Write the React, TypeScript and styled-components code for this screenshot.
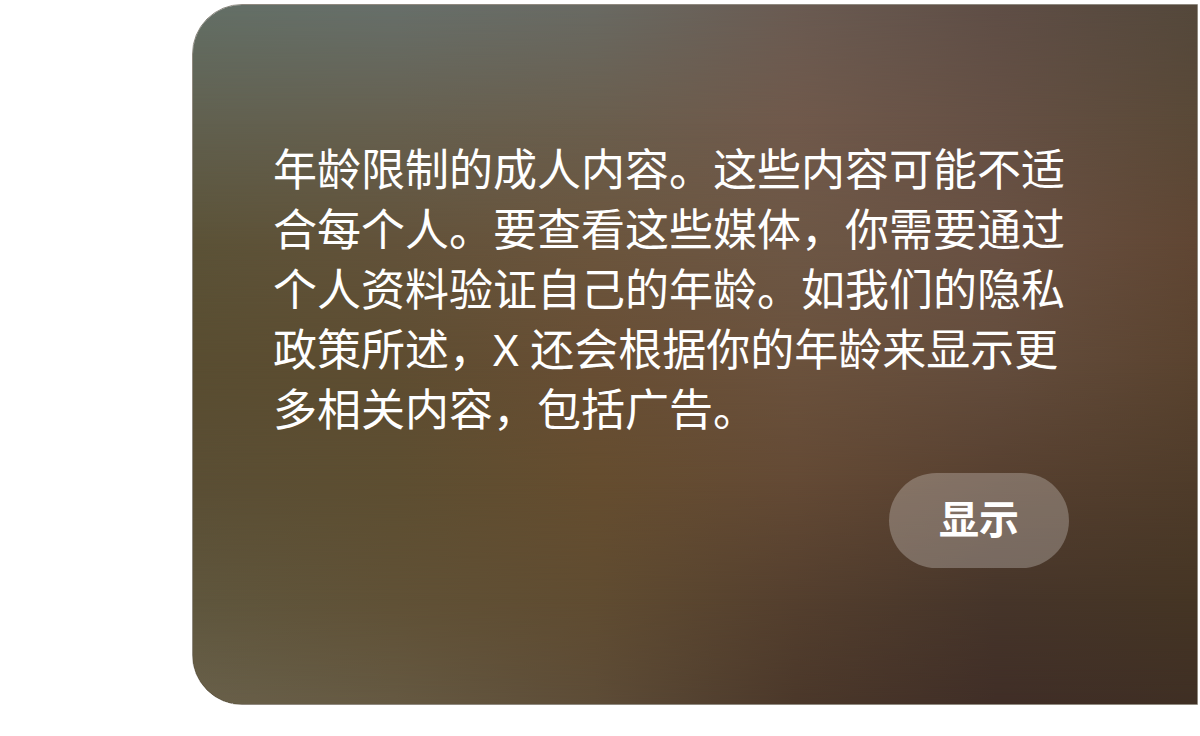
import React from "react";
import styled, { createGlobalStyle } from "styled-components";

const GlobalStyle = createGlobalStyle`
  *, *::before, *::after { box-sizing: border-box; }
  body {
    margin: 0;
    background: #ffffff;
    font-family: "Noto Sans", "Noto Sans CJK SC", sans-serif;
  }
`;

/* Each band is a left-to-right run of colours; bands fade into one another downwards. */
const bands = [
  { from: 0, to: 0, colors: ["#636f66", "#676f6a", "#696a63", "#6a5b52", "#5f4e46", "#54483b"] },
  { from: 0, to: 17, colors: ["#61604f", "#66604f", "#6a5e4d", "#70594b", "#655044", "#5a4937"] },
  { from: 17, to: 34, colors: ["#5b5237", "#62523a", "#6b553d", "#6d5745", "#695143", "#604633"] },
  { from: 34, to: 51, colors: ["#594d31", "#5e4d31", "#684e34", "#6b523d", "#644d3d", "#5a432f"] },
  { from: 51, to: 68, colors: ["#5a4e34", "#5d4e31", "#654d2f", "#644a35", "#574030", "#4f3c2a"] },
  { from: 68, to: 85, colors: ["#5f563d", "#605136", "#604c31", "#543f2e", "#46352a", "#453524"] },
  { from: 85, to: 100, colors: ["#68604a", "#655942", "#5d4c37", "#4b382a", "#402e27", "#3f2f24"] },
];

const Page = styled.main`
  padding: 4px 2px 31px 16%;
`;

const MediaCard = styled.section`
  display: grid;
  overflow: hidden;
  border: 1px solid #8f897f;
  border-radius: 50px 0 0 50px;
`;

const Backdrop = styled.div`
  display: grid;
  grid-area: 1 / 1;
`;

const Band = styled.div<{ $from: number; $to: number; $colors: string[] }>`
  grid-area: 1 / 1;
  background: linear-gradient(to right, ${(p) => p.$colors.join(", ")});
  mask-image: ${(p) =>
    p.$to === 0 ? "none" : `linear-gradient(to bottom, transparent ${p.$from}%, #000 ${p.$to}%)`};
`;

const Content = styled.div`
  grid-area: 1 / 1;
  z-index: 1;
  display: flex;
  flex-direction: column;
  gap: 34px;
  padding: 134px 128px 136px 80px;
`;

const Notice = styled.p`
  margin: 0;
  color: #ffffff;
  font-size: 44px;
  font-weight: 400;
  line-height: 60px;
`;

const ShowButton = styled.button`
  align-self: flex-end;
  height: 95px;
  padding: 0 50px 4px;
  border: 0;
  border-radius: 48px;
  background: rgba(255, 255, 255, 0.25);
  color: #ffffff;
  font-family: inherit;
  font-size: 40px;
  font-weight: 700;
  line-height: 60px;
  cursor: pointer;
`;

export default function App() {
  return (
    <>
      <GlobalStyle />
      <Page>
        <MediaCard>
          <Backdrop aria-hidden="true">
            {bands.map((band) => (
              <Band key={band.to} $from={band.from} $to={band.to} $colors={band.colors} />
            ))}
          </Backdrop>
          <Content>
            <Notice>
              年龄限制的成人内容。这些内容可能不适合每个人。要查看这些媒体，你需要通过个人资料验证自己的年龄。如我们的隐私政策所述，X
              还会根据你的年龄来显示更多相关内容，包括广告。
            </Notice>
            <ShowButton type="button">显示</ShowButton>
          </Content>
        </MediaCard>
      </Page>
    </>
  );
}
